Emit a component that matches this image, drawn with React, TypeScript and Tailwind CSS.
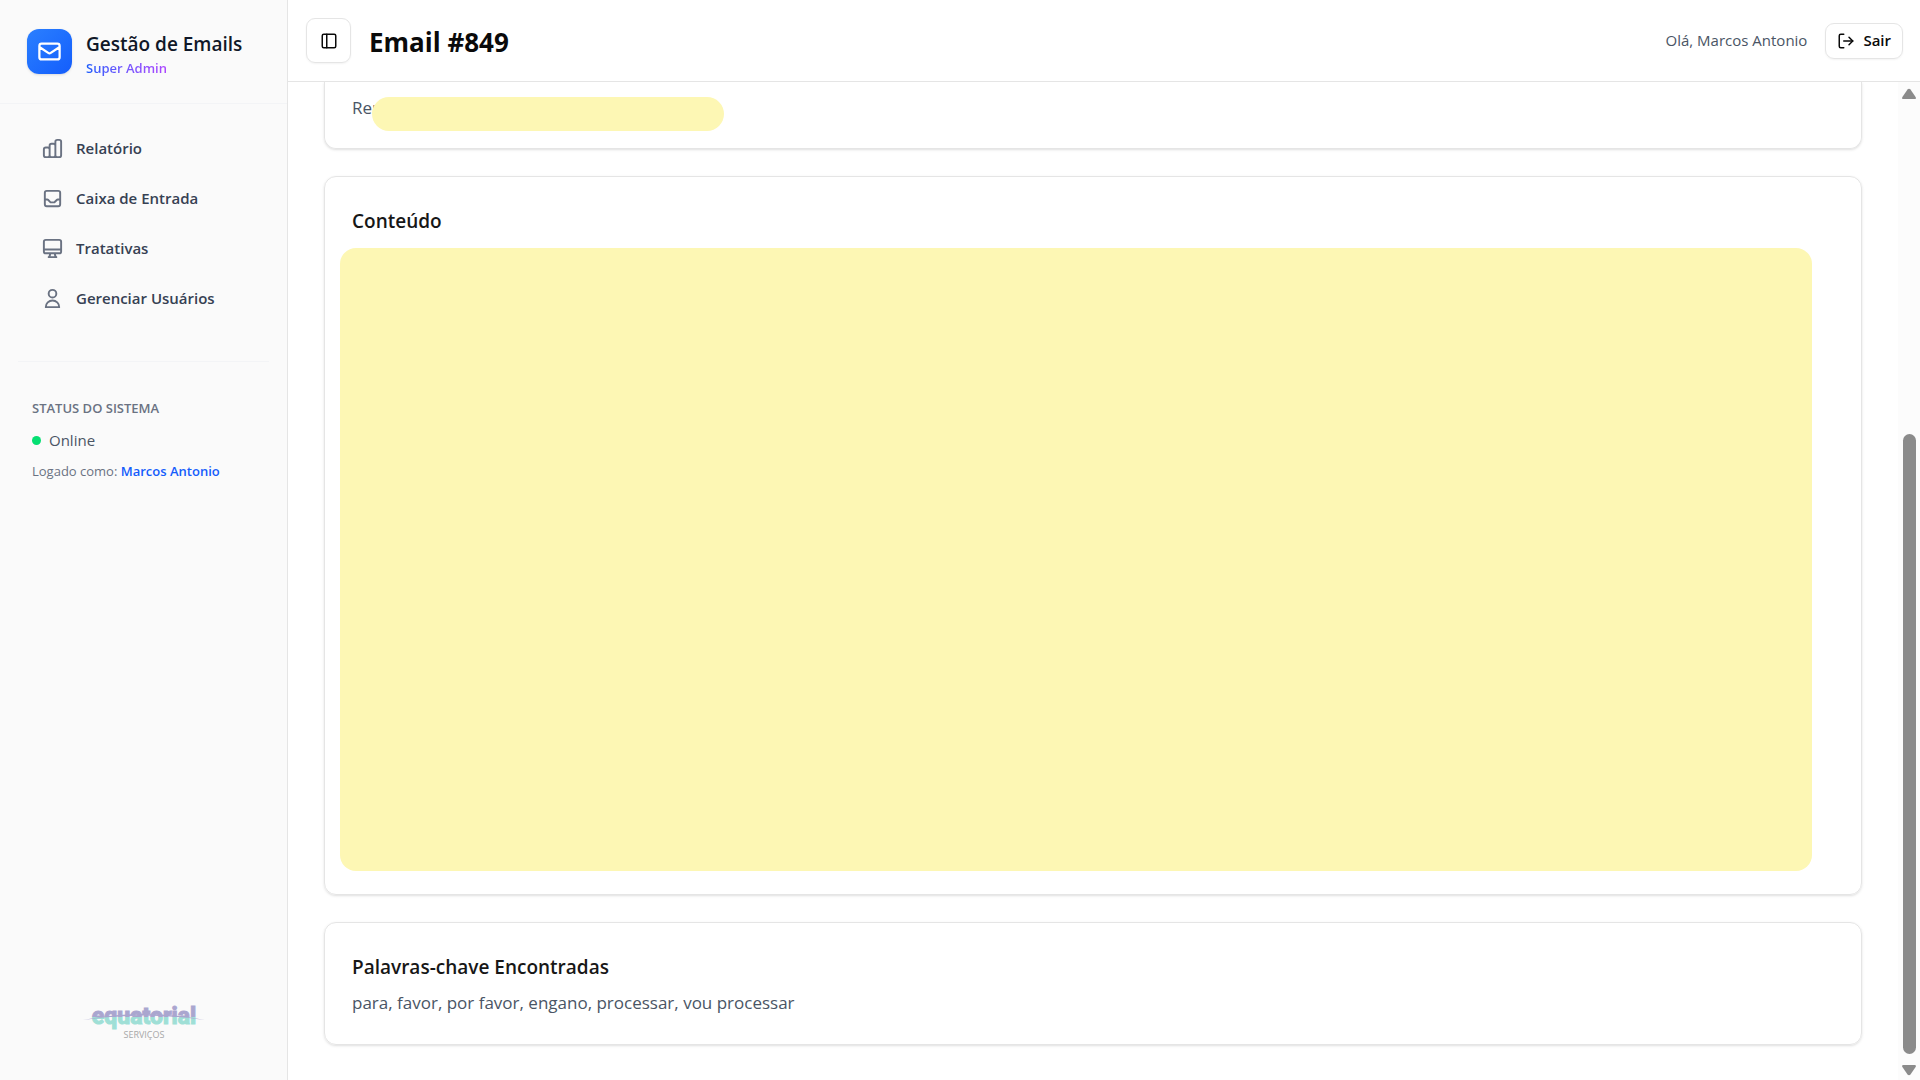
import {LogOut, PanelLeft} from 'lucide-react';

type NavItem = {
  label: string;
  path: string;
};

const NAV_ITEMS: NavItem[] = [
  {
    label: 'Relatório',
    path: 'M9 19v-6a2 2 0 00-2-2H5a2 2 0 00-2 2v6a2 2 0 002 2h2a2 2 0 002-2zm0 0V9a2 2 0 012-2h2a2 2 0 012 2v10m-6 0a2 2 0 002 2h2a2 2 0 002-2m0 0V5a2 2 0 012-2h2a2 2 0 012 2v14a2 2 0 01-2 2h-2a2 2 0 01-2-2z',
  },
  {
    label: 'Caixa de Entrada',
    path: 'M20 13V6a2 2 0 00-2-2H6a2 2 0 00-2 2v7m16 0v5a2 2 0 01-2 2H6a2 2 0 01-2-2v-5m16 0h-2.586a1 1 0 00-.707.293l-2.414 2.414a1 1 0 01-.707.293h-3.172a1 1 0 01-.707-.293l-2.414-2.414A1 1 0 006.586 13H4',
  },
  {
    label: 'Tratativas',
    path: 'M9.75 17L9 20l-1 1h8l-1-1-.75-3M3 13h18M5 17h14a2 2 0 002-2V5a2 2 0 00-2-2H5a2 2 0 00-2 2v10a2 2 0 002 2z',
  },
  {
    label: 'Gerenciar Usuários',
    path: 'M16 7a4 4 0 11-8 0 4 4 0 018 0zM12 14a7 7 0 00-7 7h14a7 7 0 00-7-7z',
  },
];

const MAIL_PATH =
  'M3 8l7.89 5.26a2 2 0 002.22 0L21 8M5 19h14a2 2 0 002-2V7a2 2 0 00-2-2H5a2 2 0 00-2 2v10a2 2 0 002 2z';

export default function App() {
  return (
    <div className="flex h-screen overflow-hidden bg-white font-['Open_Sans','Noto_Sans',sans-serif] text-neutral-950">
      <Sidebar />
      <div className="flex min-w-0 flex-1 flex-col">
        <Header />
        <div className="flex min-h-0 flex-1">
          <EmailDetails />
          <ScrollRail />
        </div>
      </div>
    </div>
  );
}

function OutlineIcon({path, className}: {path: string; className: string}) {
  return (
    <svg className={className} viewBox="0 0 24 24" fill="none" stroke="currentColor" strokeWidth="2" strokeLinecap="round" strokeLinejoin="round" aria-hidden="true">
      <path d={path} />
    </svg>
  );
}

function Sidebar() {
  return (
    <aside className="flex w-72 shrink-0 flex-col border-r border-neutral-200 bg-neutral-50">
      <div className="flex h-26 items-center gap-[14px] border-b border-gray-100 px-[27px]">
        <div className="flex size-[45px] items-center justify-center rounded-xl bg-linear-to-br from-[#2b7fff] to-[#155dfc] text-white shadow-sm">
          <OutlineIcon path={MAIL_PATH} className="size-[27px]" />
        </div>
        <div className="pt-1">
          <p className="text-[19px] leading-7 font-semibold text-gray-900">Gestão de Emails</p>
          <p className="w-fit bg-linear-to-r from-[#155dfc] to-[#ad46ff] bg-clip-text text-[13px] leading-5 font-semibold text-transparent">
            Super Admin
          </p>
        </div>
      </div>

      <nav className="flex flex-col gap-1 px-[21px] pt-[21px] pb-10">
        {NAV_ITEMS.map((item) => (
          <a key={item.label} href="#" className="flex h-[46px] items-center gap-3 px-5 text-[15px] font-semibold text-gray-700">
            <OutlineIcon path={item.path} className="size-[23px] text-gray-500" />
            {item.label}
          </a>
        ))}
      </nav>

      <div className="mx-[18px] border-t border-gray-100 px-[14px] pt-[34px]">
        <h2 className="text-[13px] leading-6 font-semibold text-gray-500">STATUS DO SISTEMA</h2>
        <div className="mt-2 flex items-center gap-2">
          <span className="size-[9px] rounded-full bg-[#05df72]" />
          <span className="text-[15px] leading-6 text-gray-600">Online</span>
        </div>
        <p className="mt-[7px] text-[13px] leading-6 text-gray-500">
          Logado como: <span className="font-semibold text-[#155dfc]">Marcos Antonio</span>
        </p>
      </div>

      <div className="mt-auto flex justify-center pb-[38px]">
        <CompanyLogo />
      </div>
    </aside>
  );
}

function CompanyLogo() {
  return (
    <svg className="h-11 w-32" viewBox="0 0 128 44" role="img" aria-label="Equatorial Serviços">
      <defs>
        <linearGradient id="logo-fill" gradientUnits="userSpaceOnUse" x1="0" y1="0" x2="0" y2="38">
          <stop offset="50%" stopColor="#aaa6cf" />
          <stop offset="50%" stopColor="#9fdfd6" />
        </linearGradient>
      </defs>
      <text x="64" y="26" textAnchor="middle" fill="url(#logo-fill)" stroke="url(#logo-fill)" strokeWidth="1" className="font-[Roboto,sans-serif] text-[23px] font-extrabold">
        equatorial
      </text>
      <path d="M3 22Q64 10 125 22Q64 13 3 22Z" fill="#aaa6cf" />
      <text x="64" y="40" textAnchor="middle" fill="#a8a8a8" className="text-[9px]">
        SERVIÇOS
      </text>
    </svg>
  );
}

function Header() {
  return (
    <header className="flex h-[82px] shrink-0 items-center justify-between border-b border-neutral-200 pr-[17px] pl-[18px]">
      <div className="flex items-center gap-[18px]">
        <button type="button" aria-label="Alternar menu" className="flex size-[45px] items-center justify-center rounded-[9px] border border-neutral-200 shadow-xs">
          <PanelLeft className="size-[18px]" />
        </button>
        <h1 className="pt-0.5 text-[26px] leading-9 font-bold">Email #849</h1>
      </div>
      <div className="flex items-center gap-[18px]">
        <span className="text-[15px] text-gray-600">Olá, Marcos Antonio</span>
        <button type="button" className="flex h-9 items-center gap-2 rounded-[9px] border border-neutral-200 px-[11px] text-[15px] font-semibold shadow-xs">
          <LogOut className="size-[18px]" />
          Sair
        </button>
      </div>
    </header>
  );
}

function EmailDetails() {
  return (
    <main className="flex min-w-0 flex-1 flex-col gap-[27px] overflow-hidden px-9 pb-[35px]">
      <section className="h-[67px] shrink-0 rounded-b-xl border border-t-0 border-neutral-200 px-[27px] pt-3 shadow-sm">
        <p className="relative text-[17px] leading-7 text-gray-600">
          Remetente:
          <span className="absolute top-[3px] left-5 h-[34px] w-[352px] rounded-full bg-[#fdf7b4]" />
        </p>
      </section>

      <section className="flex min-h-0 flex-1 flex-col rounded-xl border border-neutral-200 pt-[30px] pr-[49px] pb-[23px] pl-[15px] shadow-sm">
        <h2 className="px-3 text-[19px] leading-7 font-semibold text-neutral-900">Conteúdo</h2>
        <div className="mt-[13px] flex-1 rounded-2xl bg-[#fdf7b4]" />
      </section>

      <section className="h-[123px] shrink-0 rounded-xl border border-neutral-200 px-[27px] pt-[30px] shadow-sm">
        <h2 className="text-[19px] leading-7 font-semibold text-neutral-900">Palavras-chave Encontradas</h2>
        <p className="mt-2 text-[17px] leading-7 text-gray-600">para, favor, por favor, engano, processar, vou processar</p>
      </section>
    </main>
  );
}

function ScrollArrow({className}: {className: string}) {
  return (
    <svg className={className} viewBox="0 0 16 12" fill="#8b8b8b">
      <path d="M6.5 1.6Q8 0 9.5 1.6L14.6 9Q15.6 11 13.6 11H2.4Q0.4 11 1.4 9Z" />
    </svg>
  );
}

function ScrollRail() {
  return (
    <div className="flex w-[22px] shrink-0 flex-col items-center bg-[#fcfcfc] pt-1.5 pb-1" aria-hidden="true">
      <ScrollArrow className="h-3 w-4" />
      <div className="flex w-[13px] flex-1 flex-col justify-end pb-2.5">
        <div className="h-[65%] rounded-full bg-[#8b8b8b]" />
      </div>
      <ScrollArrow className="h-3 w-4 rotate-180" />
    </div>
  );
}
